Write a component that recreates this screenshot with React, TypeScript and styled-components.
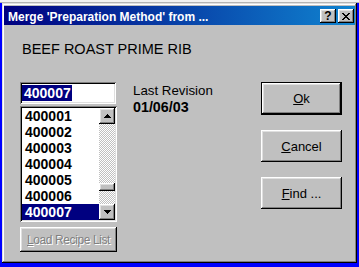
import React from "react";
import styled, { createGlobalStyle, css } from "styled-components";

const Global = createGlobalStyle`
  html, body { margin: 0; padding: 0; width: 359px; height: 267px; overflow: hidden; background: #0000ff; }
  #root { width: 359px; height: 267px; }
`;

const raised = css`
  background: #c0c0c0;
  box-shadow: inset -1px -1px #000, inset 1px 1px #fff, inset -2px -2px #808080, inset 2px 2px #dfdfdf;
`;

const sunken = css`
  box-shadow: inset 1px 1px #808080, inset -1px -1px #fff, inset 2px 2px #000, inset -2px -2px #dfdfdf;
`;

const Screen = styled.div`
  width: 359px;
  height: 267px;
  background: #0000ff;
  display: flex;
  flex-direction: column;
  font-family: "Liberation Sans", Arial, sans-serif;
  color: #000;
`;

const TopStrip = styled.div`
  height: 2px;
  background: #f2f2f2;
  border-bottom: 1px solid #b4b4b4;
  flex-shrink: 0;
`;

const Window = styled.div`
  margin-left: 2px;
  width: 355px;
  height: 260px;
  box-sizing: border-box;
  padding: 3px 2px 2px 2px;
  background: #c0c0c0;
  box-shadow: inset -1px -1px #000, inset 1px 1px #dfdfdf, inset -2px -2px #808080, inset 2px 2px #fff;
  display: flex;
  flex-direction: column;
`;

const TitleBar = styled.div`
  height: 19px;
  flex-shrink: 0;
  background: linear-gradient(to right, #000080, #1084d0);
  display: flex;
  align-items: center;
  padding: 0 1px 0 4px;
`;

const TitleText = styled.div`
  flex: 1;
  color: #fff;
  font-weight: bold;
  font-size: 12px;
  line-height: 14px;
  padding-top: 2px;
  white-space: nowrap;
`;

const TitleButton = styled.div<{ $gap?: boolean }>`
  ${raised};
  width: 16px;
  height: 14px;
  margin-left: ${(p) => (p.$gap ? "2px" : "0")};
  margin-top: 1px;
  display: flex;
  align-items: center;
  justify-content: center;
  font-weight: bold;
  font-size: 12px;
  line-height: 14px;
`;

const Header = styled.div`
  margin: 16px 0 0 18px;
  font-size: 14.5px;
  line-height: 17px;
`;

const Row = styled.div`
  display: flex;
  align-items: flex-start;
  margin-top: 24px;
  padding: 0 13px 0 16px;
`;

const LeftCol = styled.div`
  width: 97px;
  display: flex;
  flex-direction: column;
`;

const Edit = styled.div`
  ${sunken};
  background: #fff;
  width: 96px;
  height: 22px;
  box-sizing: border-box;
  padding: 2px 2px 2px 2px;
  display: flex;
  align-items: center;
`;

const Selected = styled.span`
  background: #000080;
  color: #fff;
  font-weight: bold;
  font-size: 14px;
  line-height: 16px;
  padding: 0 1px 0 2px;
`;

const ListBox = styled.div`
  ${sunken};
  background: #fff;
  margin-top: 2px;
  width: 97px;
  height: 116px;
  box-sizing: border-box;
  padding: 2px;
  display: flex;
`;

const Items = styled.div`
  flex: 1;
  display: flex;
  flex-direction: column;
`;

const Item = styled.div<{ $sel?: boolean }>`
  height: 16px;
  line-height: 16px;
  font-weight: bold;
  font-size: 14px;
  padding-left: 3px;
  background: ${(p) => (p.$sel ? "#000080" : "transparent")};
  color: ${(p) => (p.$sel ? "#fff" : "#000")};
`;

const ScrollBar = styled.div`
  width: 16px;
  display: flex;
  flex-direction: column;
`;

const ArrowButton = styled.div`
  ${raised};
  width: 16px;
  height: 16px;
  display: flex;
  align-items: center;
  justify-content: center;
`;

const Track = styled.div`
  flex: 1;
  display: flex;
  flex-direction: column;
  background: repeating-conic-gradient(#fff 0 25%, #c0c0c0 0 50%) 0 0 / 2px 2px;
`;

const Thumb = styled.div<{ $offset: number }>`
  ${raised};
  margin-top: ${(p) => p.$offset}px;
  height: 8px;
`;

const LoadButton = styled.div`
  ${raised};
  margin-top: 5px;
  width: 97px;
  height: 25px;
  display: flex;
  align-items: center;
  justify-content: center;
  font-size: 12px;
  letter-spacing: -0.4px;
  color: #808080;
  text-shadow: 1px 1px #fff;
`;

const MidCol = styled.div`
  margin-left: 16px;
  display: flex;
  flex-direction: column;
`;

const Label = styled.div`
  font-size: 13.3px;
  line-height: 17px;
`;

const DateText = styled.div`
  font-size: 14.3px;
  font-weight: bold;
  line-height: 16px;
`;

const RightCol = styled.div`
  margin-left: auto;
  display: flex;
  flex-direction: column;
  gap: 15px;
`;

const Button = styled.div<{ $default?: boolean }>`
  width: 81px;
  height: ${(p) => (p.$default ? "33px" : "32px")};
  box-sizing: border-box;
  display: flex;
  align-items: center;
  justify-content: center;
  font-size: 13px;
  background: #c0c0c0;
  box-shadow: inset -1px -1px #000, inset 1px 1px #fff, inset -2px -2px #808080, inset 2px 2px #dfdfdf;
  border: ${(p) => (p.$default ? "1px solid #000" : "none")};
`;

const UpArrow = () => (
  <svg width="7" height="4" viewBox="0 0 7 4">
    <path d="M3 0h1v1h1v1h1v1h1v1H0V3h1V2h1V1h1z" fill="#000" />
  </svg>
);

const DownArrow = () => (
  <svg width="7" height="4" viewBox="0 0 7 4">
    <path d="M0 0h7v1H6v1H5v1H4v1H3V3H2V2H1V1H0z" fill="#000" />
  </svg>
);

const CloseGlyph = () => (
  <svg width="8" height="7" viewBox="0 0 8 7">
    <path
      d="M0 0h2v1h1v1h2V1h1V0h2v1H7v1H6v1H5v1h1v1h1v1h1v1H6V6H5V5H3v1H2v1H0V6h1V5h1V4h1V3H2V2H1V1H0z"
      fill="#000"
    />
  </svg>
);

const items = ["400001", "400002", "400003", "400004", "400005", "400006", "400007"];

export default function App() {
  return (
    <Screen>
      <Global />
      <TopStrip />
      <Window>
        <TitleBar>
          <TitleText>Merge 'Preparation Method' from ...</TitleText>
          <TitleButton>?</TitleButton>
          <TitleButton $gap>
            <CloseGlyph />
          </TitleButton>
        </TitleBar>
        <Header>BEEF ROAST PRIME RIB</Header>
        <Row>
          <LeftCol>
            <Edit>
              <Selected>400007</Selected>
            </Edit>
            <ListBox>
              <Items>
                {items.map((it) => (
                  <Item key={it} $sel={it === "400007"}>
                    {it}
                  </Item>
                ))}
              </Items>
              <ScrollBar>
                <ArrowButton>
                  <UpArrow />
                </ArrowButton>
                <Track>
                  <Thumb $offset={59} />
                </Track>
                <ArrowButton>
                  <DownArrow />
                </ArrowButton>
              </ScrollBar>
            </ListBox>
            <LoadButton>
              <span>
                <u>L</u>oad Recipe List
              </span>
            </LoadButton>
          </LeftCol>
          <MidCol>
            <Label>Last Revision</Label>
            <DateText>01/06/03</DateText>
          </MidCol>
          <RightCol>
            <Button $default>
              <span>
                <u>O</u>k
              </span>
            </Button>
            <Button>
              <span>
                <u>C</u>ancel
              </span>
            </Button>
            <Button>
              <span>
                <u>F</u>ind ...
              </span>
            </Button>
          </RightCol>
        </Row>
      </Window>
    </Screen>
  );
}
